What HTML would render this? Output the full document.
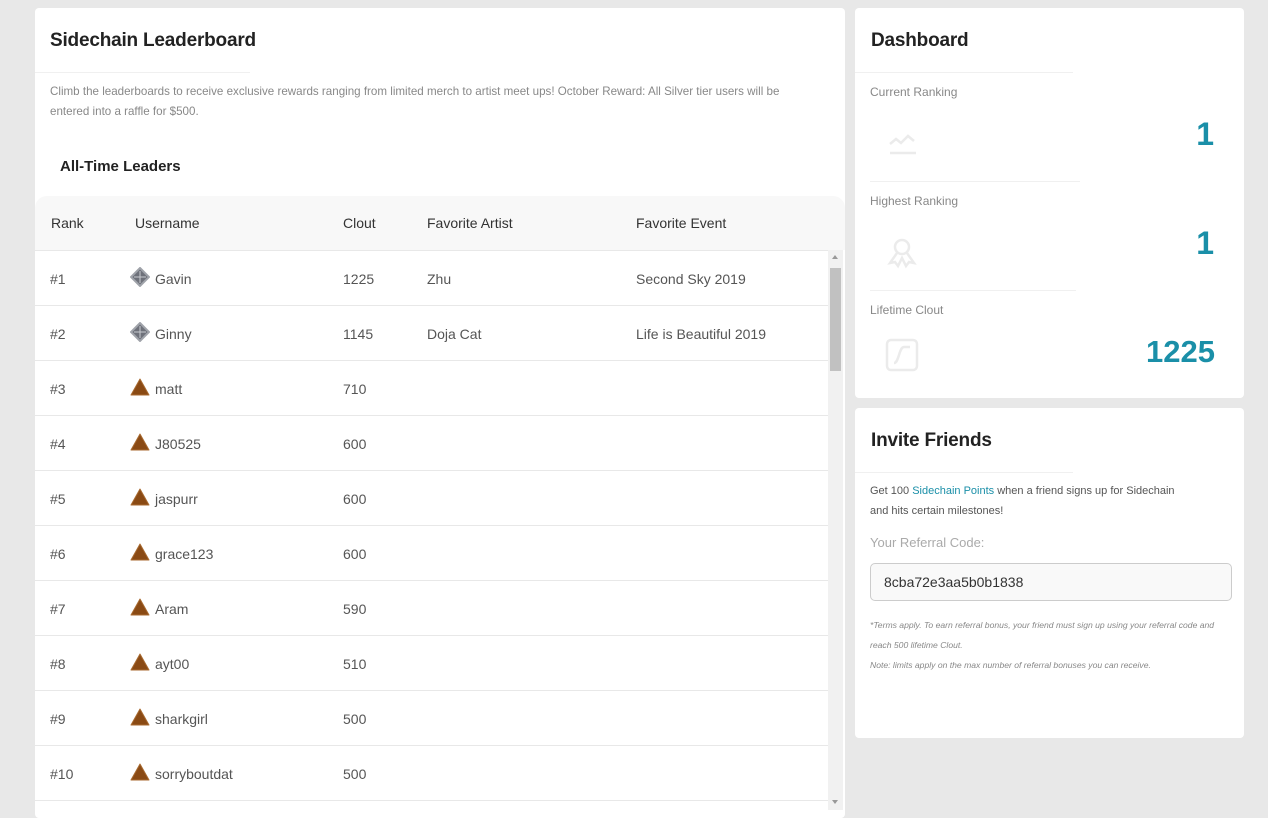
<!DOCTYPE html>
<html><head><style>
*{margin:0;padding:0;box-sizing:border-box}
body{width:1268px;height:808px;background:#e8e8e8;font-family:"Liberation Sans",sans-serif;position:relative;overflow:hidden}
.card{position:absolute;background:#fff;border-radius:4px}
.abs{position:absolute;white-space:nowrap}
h2{font-size:19px;font-weight:bold;color:#222;letter-spacing:-0.2px}
.hr{position:absolute;height:1px;background:#f0f0f0}
.row{position:absolute;left:0;width:793px;height:55px;border-top:1px solid #e8e8e8;font-size:14px;color:#555}
.row span{position:absolute;top:20px}
.lab{font-size:12px;color:#888}
.num{font-size:32px;color:#1a8fa8;text-align:right;font-weight:bold}
</style></head><body>
<div class="card" style="left:35px;top:8px;width:810px;height:810px;overflow:hidden">
  <h2 class="abs" style="left:15px;top:22px">Sidechain Leaderboard</h2>
  <div class="hr" style="left:0;top:64px;width:215px"></div>
  <div class="abs" style="left:15px;top:74px;font-size:11.6px;color:#888;line-height:20px;white-space:normal;width:760px">Climb the leaderboards to receive exclusive rewards ranging from limited merch to artist meet ups! October Reward: All Silver tier users will be entered into a raffle for $500.</div>
  <div class="abs" style="left:25px;top:150px;font-size:15px;font-weight:bold;color:#222">All-Time Leaders</div>
  <div class="abs" style="left:0;top:188px;width:810px;height:54px;background:#f8f8f8;border-radius:12px 12px 0 0;font-size:14px;color:#333">
    <span class="abs" style="left:16px;top:19px">Rank</span>
    <span class="abs" style="left:100px;top:19px">Username</span>
    <span class="abs" style="left:308px;top:19px">Clout</span>
    <span class="abs" style="left:392px;top:19px">Favorite Artist</span>
    <span class="abs" style="left:601px;top:19px">Favorite Event</span>
  </div>
  <div class="abs" style="left:793px;top:242px;width:15px;height:560px;background:#f1f1f1">
    <div style="position:absolute;left:2px;top:18px;width:11px;height:103px;background:#c1c1c1"></div>
    <div style="position:absolute;left:4px;top:5px;border:3px solid transparent;border-bottom:4px solid #999;border-top:0"></div>
    <div style="position:absolute;left:4px;bottom:6px;border:3px solid transparent;border-top:4px solid #999;border-bottom:0"></div>
  </div>
  <div id="rows"></div>
</div>
<div class="card" style="left:855px;top:8px;width:389px;height:390px">
  <h2 class="abs" style="left:16px;top:22px">Dashboard</h2>
  <div class="hr" style="left:0;top:64px;width:218px"></div>
  <div class="abs lab" style="left:15px;top:77px">Current Ranking</div>
  <svg class="abs" style="left:33px;top:124px" width="30" height="24" viewBox="0 0 30 24" fill="none" stroke="#ebebeb" stroke-width="2.5"><path d="M2 12l6-5 5 4 7-7 6 5M2 21h26"/></svg>
  <div class="abs num" style="right:30px;top:108px">1</div>
  <div class="hr" style="left:15px;top:173px;width:210px"></div>
  <div class="abs lab" style="left:15px;top:186px">Highest Ranking</div>
  <svg class="abs" style="left:32px;top:230px" width="30" height="32" viewBox="0 0 30 32" fill="none" stroke="#ebebeb" stroke-width="2.5"><circle cx="15" cy="9" r="7"/><path d="M10 15l-7 10 5-1 3 4 4-8 4 8 3-4 5 1-7-10"/></svg>
  <div class="abs num" style="right:30px;top:217px">1</div>
  <div class="hr" style="left:15px;top:282px;width:206px"></div>
  <div class="abs lab" style="left:15px;top:295px">Lifetime Clout</div>
  <svg class="abs" style="left:30px;top:330px" width="34" height="34" viewBox="0 0 34 34" fill="none" stroke="#ebebeb" stroke-width="2.5"><rect x="2" y="2" width="30" height="30" rx="4"/><path d="M9 25c5 0 5-16 10-16h6"/></svg>
  <div class="abs num" style="right:29px;top:326px;font-size:31px">1225</div>
</div>
<div class="card" style="left:855px;top:408px;width:389px;height:330px">
  <h2 class="abs" style="left:16px;top:22px">Invite Friends</h2>
  <div class="hr" style="left:0;top:64px;width:218px"></div>
  <div class="abs" style="left:15px;top:73px;font-size:11px;color:#555;line-height:20px">Get 100 <span style="color:#1a8fa8">Sidechain Points</span> when a friend signs up for Sidechain<br>and hits certain milestones!</div>
  <div class="abs" style="left:15px;top:127px;font-size:13px;color:#aaa">Your Referral Code:</div>
  <div class="abs" style="left:15px;top:155px;width:362px;height:38px;border:1px solid #ccc;border-radius:5px;background:#f9f9f9;font-size:14px;color:#333;padding:10px 13px">8cba72e3aa5b0b1838</div>
  <div class="abs" style="left:15px;top:207px;font-size:8.6px;font-style:italic;color:#888;line-height:20px">*Terms apply. To earn referral bonus, your friend must sign up using your referral code and<br>reach 500 lifetime Clout.<br>Note: limits apply on the max number of referral bonuses you can receive.</div>
</div>
<script>
var d=[["Gavin",1225,"Zhu","Second Sky 2019",1],["Ginny",1145,"Doja Cat","Life is Beautiful 2019",1],["matt",710],["J80525",600],["jaspurr",600],["grace123",600],["Aram",590],["ayt00",510],["sharkgirl",500],["sorryboutdat",500],["",""]];
var h="";
d.forEach(function(r,i){
 var ic=r[4]?'<svg style="position:absolute;left:95px;top:16px" width="20" height="20" viewBox="0 0 20 20"><path d="M10 1L19 10 10 19 1 10z" fill="#6e717a" stroke="#a0a3aa" stroke-width="2"/><path d="M10 4v12M4 10h12" stroke="#c8cad0" stroke-width="1"/></svg>':'<svg style="position:absolute;left:95px;top:16px" width="20" height="20" viewBox="0 0 20 20"><path d="M10 2L19 18H1z" fill="#8a4a14" stroke="#a86a30" stroke-width="1" stroke-linejoin="round"/></svg>';
 if(i==10){h+='<div class="row" style="top:'+(242+i*55)+'px"></div>';return;}
 h+='<div class="row" style="top:'+(242+i*55)+'px"><span style="left:15px">#'+(i+1)+'</span>'+ic+'<span style="left:120px">'+r[0]+'</span><span style="left:308px">'+r[1]+'</span><span style="left:392px">'+(r[2]||"")+'</span><span style="left:601px">'+(r[3]||"")+'</span></div>';
});
document.getElementById("rows").innerHTML=h;
</script>
</body></html>
